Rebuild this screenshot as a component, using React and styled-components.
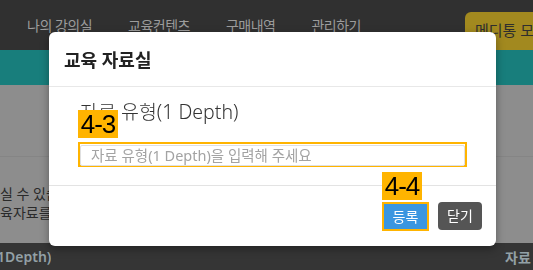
import React from "react";
import styled, { createGlobalStyle } from "styled-components";

const GlobalStyle = createGlobalStyle`
  html, body {
    margin: 0;
    padding: 0;
    width: 533px;
    height: 270px;
    overflow: hidden;
    font-family: "Noto Sans", "Noto Sans CJK KR", sans-serif;
  }
  * {
    box-sizing: border-box;
  }
`;

const Page = styled.div`
  display: flex;
  flex-direction: column;
  width: 533px;
  height: 270px;
`;

const TopHeader = styled.div`
  display: flex;
  align-items: flex-start;
  height: 50px;
  padding-left: 27px;
  background-color: #303030;
`;

const NavList = styled.div`
  display: flex;
  gap: 36px;
  padding-top: 16px;
  flex: 1;
`;

const NavItem = styled.span`
  font-size: 14px;
  letter-spacing: -0.5px;
  color: #9c9c9c;
  line-height: 20px;
  white-space: nowrap;
`;

const VendorButton = styled.div`
  margin-top: 12px;
  height: 38px;
  width: 68px;
  padding: 7px 0 0 10px;
  border-radius: 6px 0 0 0;
  background-color: #a2891f;
  color: #2e2e2e;
  font-size: 15px;
  line-height: 22px;
  white-space: nowrap;
  overflow: hidden;
`;

const TealBar = styled.div`
  height: 35px;
  background-color: #187e7c;
`;

const Content = styled.div`
  flex: 1;
  display: flex;
  flex-direction: column;
  background-color: #8d8d8d;
`;

const ContentBlock = styled.div`
  height: 72px;
  border-bottom: 1px solid #858585;
`;

const ContentText = styled.div`
  padding-top: 27px;
  font-size: 14px;
  line-height: 19px;
  color: #2a2a2a;
  white-space: nowrap;
`;

const BottomBar = styled.div`
  display: flex;
  align-items: center;
  height: 27px;
  background-color: #353535;
  color: #93a0a6;
  font-size: 14px;
  font-weight: 600;
  white-space: nowrap;
  overflow: hidden;
`;

const BarCell = styled.span`
  margin-left: ${(p) => (p.right ? "auto" : "-3px")};
  width: ${(p) => (p.right ? "28px" : "auto")};
  overflow: hidden;
`;

const Backdrop = styled.div`
  position: fixed;
  inset: 0;
  display: flex;
  align-items: flex-start;
  padding: 32px 0 0 49px;
`;

const Modal = styled.div`
  position: relative;
  width: 447px;
  height: 214px;
  display: flex;
  flex-direction: column;
  background-color: #fff;
  border-radius: 6px;
  box-shadow: 0 3px 9px rgba(0, 0, 0, 0.35);
`;

const ModalHeader = styled.div`
  height: 55px;
  display: flex;
  align-items: center;
  padding: 0 15px;
  border-bottom: 1px solid #e8e8e8;
`;

const ModalTitle = styled.h4`
  margin: 0;
  font-size: 18px;
  font-weight: 700;
  color: #222;
`;

const ModalBody = styled.div`
  position: relative;
  height: 99px;
  padding: 12px 29px 0 29px;
  border-bottom: 1px solid #e3e3e3;
`;

const FieldLabel = styled.label`
  display: block;
  padding-left: 2px;
  font-size: 19.5px;
  font-weight: 300;
  line-height: 26px;
  color: #333;
`;

const InputFrame = styled.div`
  margin-top: 17px;
  border: 2px solid #ffb400;
  height: 25px;
`;

const TextInput = styled.input`
  width: 100%;
  height: 100%;
  border: 1px solid #e0e0e0;
  border-radius: 2px;
  padding: 0 10px;
  font-family: inherit;
  font-size: 14.5px;
  color: #333;
  outline: none;
  &::placeholder {
    color: #a3a3a3;
  }
`;

const ModalFooter = styled.div`
  position: relative;
  flex: 1;
  display: flex;
  justify-content: flex-end;
  align-items: flex-start;
  gap: 9px;
  padding: 16px 14px 0 0;
`;

const Marker = styled.span`
  position: absolute;
  left: ${(p) => p.left}px;
  top: ${(p) => p.top}px;
  width: 40px;
  height: 28px;
  background-color: #ffb400;
  color: #000;
  font-family: "Liberation Sans", sans-serif;
  font-size: 26px;
  line-height: 28px;
  letter-spacing: -1px;
  text-align: center;
`;

const Outline = styled.div`
  border: 2px solid #ffb400;
`;

const Button = styled.button`
  height: ${(p) => (p.outlined ? "25px" : "28px")};
  width: ${(p) => (p.outlined ? "43px" : "44px")};
  border: none;
  border-radius: ${(p) => (p.outlined ? "0" : "4px")};
  background-color: ${(p) => p.bg};
  color: #fff;
  font-family: inherit;
  font-size: 14px;
  line-height: 18px;
  padding: 0;
`;

export default function App() {
  return (
    <>
      <GlobalStyle />
      <Page>
        <TopHeader>
          <NavList>
            <NavItem>나의 강의실</NavItem>
            <NavItem>교육컨텐츠</NavItem>
            <NavItem>구매내역</NavItem>
            <NavItem>관리하기</NavItem>
          </NavList>
          <VendorButton>메디통 모드</VendorButton>
        </TopHeader>
        <TealBar />
        <Content>
          <ContentBlock />
          <ContentText>
            실 수 있습니다.
            <br />
            육자료를 등록하세요.
          </ContentText>
        </Content>
        <BottomBar>
          <BarCell>1Depth)</BarCell>
          <BarCell right>자료 유형</BarCell>
        </BottomBar>
      </Page>
      <Backdrop>
        <Modal>
          <ModalHeader>
            <ModalTitle>교육 자료실</ModalTitle>
          </ModalHeader>
          <ModalBody>
            <FieldLabel>자료 유형(1 Depth)</FieldLabel>
            <Marker left={29} top={23}>4-3</Marker>
            <InputFrame>
              <TextInput placeholder="자료 유형(1 Depth)을 입력해 주세요" />
            </InputFrame>
          </ModalBody>
          <ModalFooter>
            <Marker left={333} top={-14}>4-4</Marker>
            <Outline>
              <Button outlined bg="#3a96e0">등록</Button>
            </Outline>
            <Button bg="#555">닫기</Button>
          </ModalFooter>
        </Modal>
      </Backdrop>
    </>
  );
}
